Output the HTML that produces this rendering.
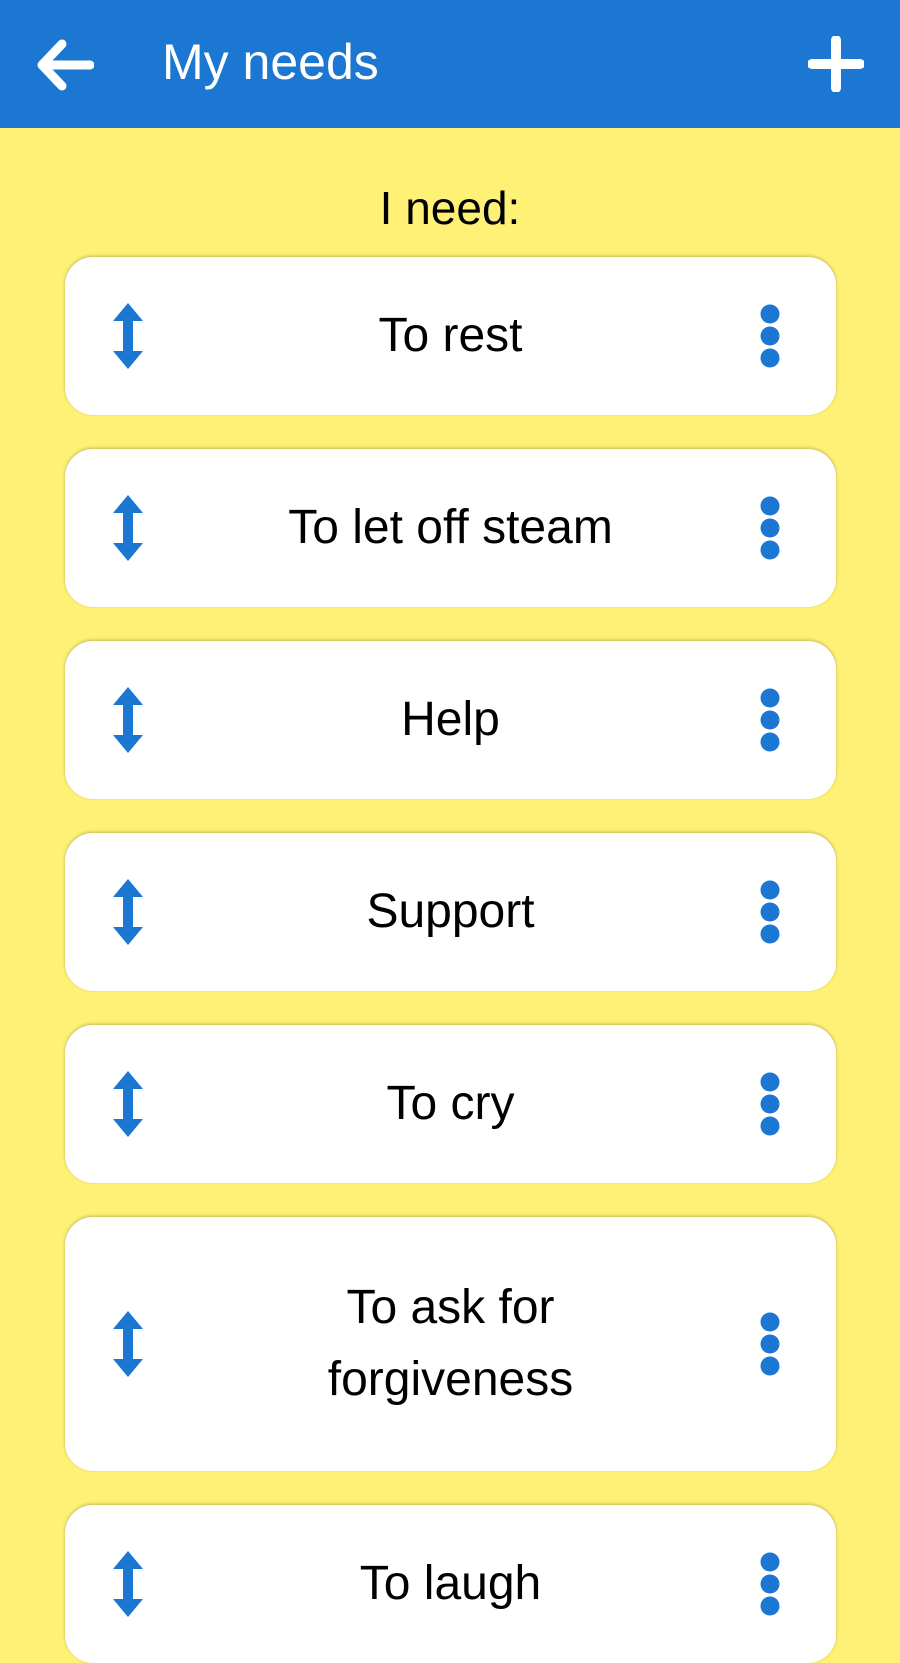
<!DOCTYPE html>
<html><head><style>
body{margin:0;width:900px;height:1600px;overflow:hidden;background:#FFF176;font-family:"Liberation Sans",sans-serif;position:relative}
.hdr{position:absolute;left:0;top:0;width:900px;height:128px;background:#1C77D2}
.title{position:absolute;left:162px;top:30px;color:#fff;font-size:50px;line-height:64px}
.need{position:absolute;left:0;width:900px;top:176px;text-align:center;font-size:46px;line-height:64px}
.card{position:absolute;left:65px;width:771px;background:#fff;border-radius:28px;box-shadow:0 -1px 3px rgba(0,0,0,.25);display:flex;align-items:center;justify-content:center;text-align:center;font-size:48px;line-height:72px}
.card .t{width:440px}
.ar{position:absolute;left:48px;top:50%;margin-top:-33px}
.dt{position:absolute;right:56px;top:50%;margin-top:-32px}
</style></head><body>
<div class="hdr">
<svg style="position:absolute;left:34px;top:38px" width="60" height="54" viewBox="0 0 60 54"><path d="M28 6 L8 27 L28 48 M8 27 H56" stroke="#fff" stroke-width="9" fill="none" stroke-linecap="round" stroke-linejoin="round"/></svg>
<div class="title">My needs</div>
<svg style="position:absolute;left:808px;top:36px" width="56" height="56" viewBox="0 0 56 56"><path d="M28 4V52M4 28H52" stroke="#fff" stroke-width="10" stroke-linecap="round"/></svg>
</div>
<div class="need">I need:</div>
<svg width="0" height="0" style="position:absolute"><defs>
<symbol id="a" viewBox="0 0 30 66"><path d="M15 0 L30 18 H20 V48 H30 L15 66 L0 48 H10 V18 H0Z" fill="#1C77D2"/></symbol>
<symbol id="d" viewBox="0 0 20 64"><circle cx="10" cy="10" r="9.5" fill="#1C77D2"/><circle cx="10" cy="32" r="9.5" fill="#1C77D2"/><circle cx="10" cy="54" r="9.5" fill="#1C77D2"/></symbol>
</defs></svg>
<div class="card" style="top:257px;height:158px"><svg class="ar" width="30" height="66"><use href="#a"/></svg><div class="t">To rest</div><svg class="dt" width="20" height="64"><use href="#d"/></svg></div>
<div class="card" style="top:449px;height:158px"><svg class="ar" width="30" height="66"><use href="#a"/></svg><div class="t">To let off steam</div><svg class="dt" width="20" height="64"><use href="#d"/></svg></div>
<div class="card" style="top:641px;height:158px"><svg class="ar" width="30" height="66"><use href="#a"/></svg><div class="t">Help</div><svg class="dt" width="20" height="64"><use href="#d"/></svg></div>
<div class="card" style="top:833px;height:158px"><svg class="ar" width="30" height="66"><use href="#a"/></svg><div class="t">Support</div><svg class="dt" width="20" height="64"><use href="#d"/></svg></div>
<div class="card" style="top:1025px;height:158px"><svg class="ar" width="30" height="66"><use href="#a"/></svg><div class="t">To cry</div><svg class="dt" width="20" height="64"><use href="#d"/></svg></div>
<div class="card" style="top:1217px;height:254px"><svg class="ar" width="30" height="66"><use href="#a"/></svg><div class="t">To ask for forgiveness</div><svg class="dt" width="20" height="64"><use href="#d"/></svg></div>
<div class="card" style="top:1505px;height:158px"><svg class="ar" width="30" height="66"><use href="#a"/></svg><div class="t">To laugh</div><svg class="dt" width="20" height="64"><use href="#d"/></svg></div>
</body></html>
